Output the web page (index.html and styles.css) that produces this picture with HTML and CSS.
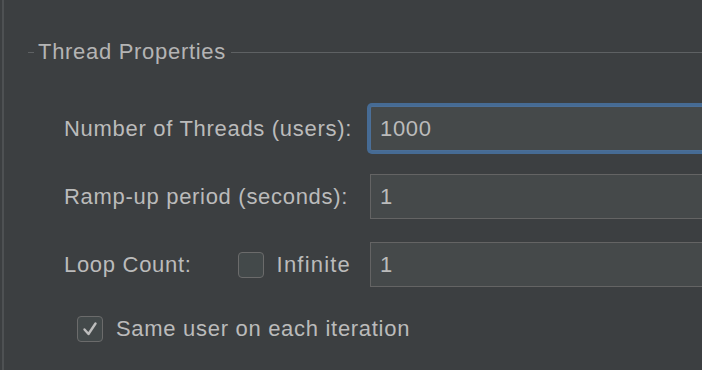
FILE: index.html
```html
<!DOCTYPE html>
<html lang="en">
<head>
    <meta charset="UTF-8">
    <title>Thread Group</title>
    <link rel="stylesheet" href="styles.css">
</head>
<body>
    <div class="panel">
        <div class="group-title">
            <span class="dash"></span>
            <span class="title-text">Thread Properties</span>
            <span class="rule"></span>
        </div>

        <div class="form">
            <label class="label">Number of Threads (users):</label>
            <div class="field focused">1000</div>

            <label class="label">Ramp-up period (seconds):</label>
            <div class="field">1</div>

            <div class="label loop">
                <span>Loop Count:</span>
                <span class="check-wrap">
                    <span class="checkbox"></span>
                    <span class="infinite">Infinite</span>
                </span>
            </div>
            <div class="field">1</div>
        </div>

        <div class="same-user">
            <span class="checkbox checked">
                <svg width="18" height="18" viewBox="0 0 18 18">
                    <polyline points="3.5,9.5 7.5,14 14.5,3.5" fill="none" stroke="#bdbdbd" stroke-width="2.4" stroke-linecap="round" stroke-linejoin="round"/>
                </svg>
            </span>
            <span>Same user on each iteration</span>
        </div>
    </div>
</body>
</html>
```

FILE: styles.css
```css
body {
    margin: 0;
    padding: 0;
    background-color: #3c3f41;
    font-family: "Liberation Sans", Arial, sans-serif;
    font-size: 22px;
    letter-spacing: 0.7px;
    color: #bbbbbb;
    overflow: hidden;
    width: 702px;
    height: 370px;
}

.panel {
    margin-left: 2px;
    border-left: 2px solid #4e5153;
    height: 370px;
    box-sizing: border-box;
}

.group-title {
    display: flex;
    align-items: center;
    padding-top: 40px;
    padding-left: 24px;
    height: 24px;
}

.dash {
    width: 6px;
    height: 1px;
    background-color: #5e6163;
}

.title-text {
    margin: 0 5px 0 4px;
    color: #b4b4b4;
    line-height: 24px;
}

.rule {
    flex: 1;
    height: 1px;
    background-color: #5e6163;
}

.form {
    display: grid;
    grid-template-columns: 306px 400px;
    grid-auto-rows: 45px;
    row-gap: 23px;
    margin-top: 42px;
    padding-left: 60px;
}

.label {
    display: flex;
    align-items: center;
}

.loop {
    justify-content: flex-start;
}

.check-wrap {
    display: flex;
    align-items: center;
    margin-left: 46px;
}

.check-wrap .checkbox {
    margin-right: 13px;
}

.infinite {
    letter-spacing: 1.2px;
}

.field {
    box-sizing: border-box;
    background-color: #45494a;
    border: 1px solid #646464;
    padding-left: 9px;
    display: flex;
    align-items: center;
}

.field.focused {
    border: 1px solid #4b6f98;
    box-shadow: 0 0 0 3px #466b94;
    border-radius: 2px;
}

.checkbox {
    display: inline-flex;
    align-items: center;
    justify-content: center;
    width: 26px;
    height: 26px;
    box-sizing: border-box;
    border: 1px solid #6b6b6b;
    border-radius: 4px;
    background-color: #43494a;
}

.same-user {
    display: flex;
    align-items: center;
    margin-top: 29px;
    padding-left: 73px;
}

.same-user .checkbox {
    margin-right: 13px;
}
```
